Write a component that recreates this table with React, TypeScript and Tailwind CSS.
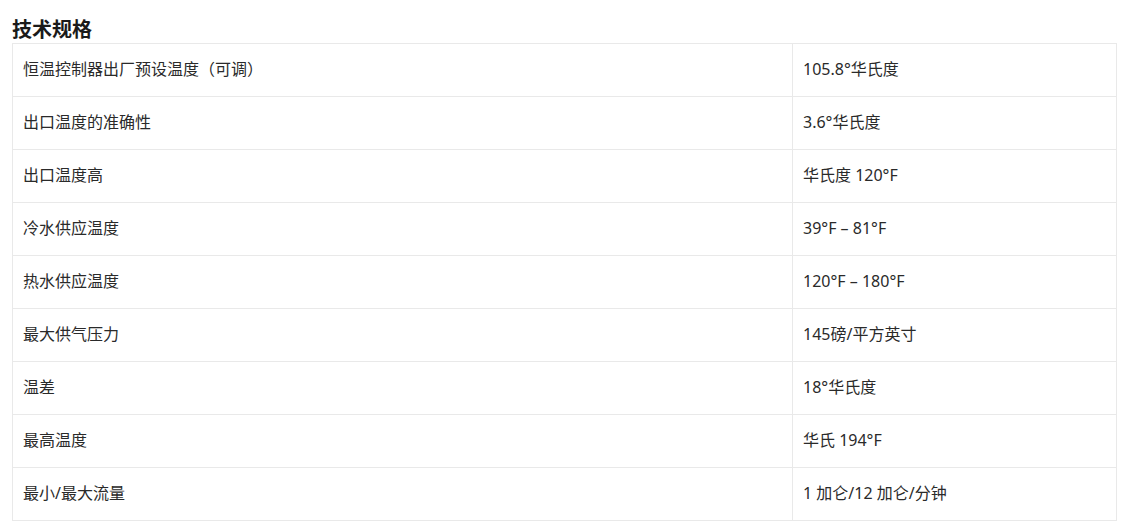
import React from "react";

const rows: [string, string][] = [
  ["恒温控制器出厂预设温度（可调）", "105.8°华氏度"],
  ["出口温度的准确性", "3.6°华氏度"],
  ["出口温度高", "华氏度 120°F"],
  ["冷水供应温度", "39°F – 81°F"],
  ["热水供应温度", "120°F – 180°F"],
  ["最大供气压力", "145磅/平方英寸"],
  ["温差", "18°华氏度"],
  ["最高温度", "华氏 194°F"],
  ["最小/最大流量", "1 加仑/12 加仑/分钟"],
];

export default function App() {
  return (
    <div
      className="w-[1126px] h-[530px] bg-white pl-[12px] pt-[17px] text-[#222]"
      style={{ fontFamily: '"Noto Sans", "Noto Sans CJK SC", sans-serif' }}
    >
      <h2 className="text-[20px] font-bold leading-[26px] h-[26px] text-[#1a1a1a]">技术规格</h2>
      <table className="w-[1105px] border-collapse text-[16px] text-[#2a2a2a]">
        <tbody>
          {rows.map(([k, v]) => (
            <tr key={k} className="h-[53px]">
              <td className="w-[780px] border border-[#e9e9e9] pl-[10px] pb-[2px] leading-[22px] align-middle">{k}</td>
              <td className="border border-[#e9e9e9] pl-[10px] pb-[2px] leading-[22px] align-middle">{v}</td>
            </tr>
          ))}
        </tbody>
      </table>
    </div>
  );
}
